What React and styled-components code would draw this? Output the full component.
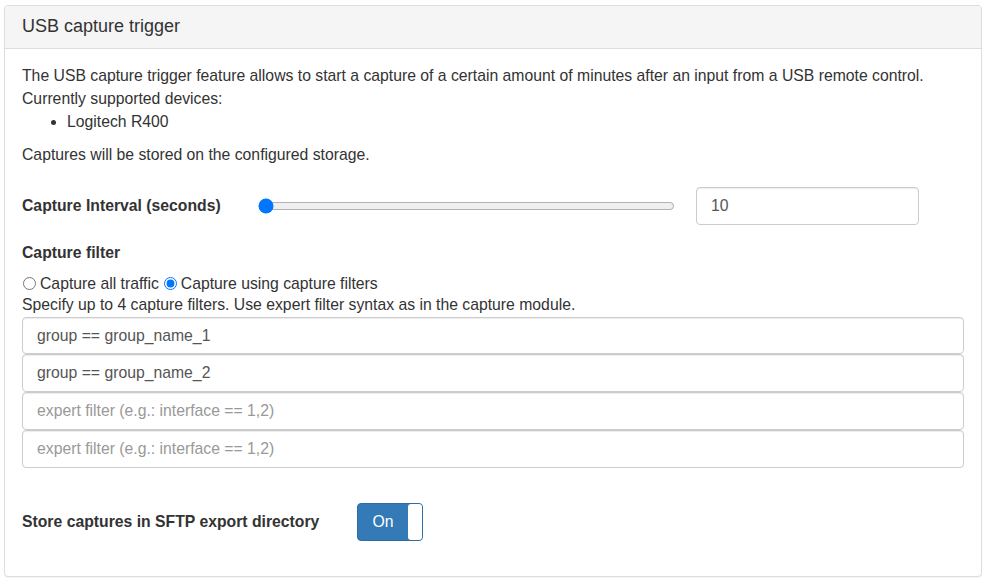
import React, { useState } from "react";
import styled, { createGlobalStyle } from "styled-components";

const GlobalStyle = createGlobalStyle`
  * { box-sizing: border-box; }
  body {
    margin: 0;
    background: #fff;
    font-family: "Liberation Sans", Arial, sans-serif;
    font-size: 15.75px;
    color: #333;
  }
`;

const Page = styled.div`
  padding: 5px 9px 8px 4px;
`;

const Panel = styled.div`
  border: 1px solid #ddd;
  border-radius: 4px;
  background: #fff;
  box-shadow: 0 1px 1px rgba(0, 0, 0, 0.05);
`;

const PanelHeading = styled.div`
  background: #f5f5f5;
  border-bottom: 1px solid #ddd;
  border-radius: 3px 3px 0 0;
  padding: 10px 17px 11px;
  font-size: 18px;
  line-height: 21px;
  color: #333;
`;

const PanelBody = styled.div`
  padding: 15px 17px 35px;
`;

const Text = styled.p`
  margin: 0;
  line-height: 23px;
`;

const List = styled.ul`
  margin: 0 0 10px;
  padding-left: 45px;
  line-height: 23px;
`;

const FormRow = styled.div`
  display: flex;
  align-items: center;
  margin-top: ${(p) => p.$top || 0}px;
`;

const Label = styled.label`
  font-weight: bold;
  width: ${(p) => p.$width || 236}px;
  flex-shrink: 0;
`;

const Range = styled.input`
  width: 417px;
  margin: 0 21px 0 0;
`;

const TextInput = styled.input`
  display: block;
  width: ${(p) => p.$width || "100%"};
  height: ${(p) => p.$height || 38}px;
  padding: 6px 14px;
  font-family: inherit;
  font-size: 15.75px;
  color: #555;
  border: 1px solid #ccc;
  border-radius: 4px;
  box-shadow: inset 0 1px 1px rgba(0, 0, 0, 0.075);
  background: #fff;
  &::placeholder { color: #999; }
`;

const Heading = styled.div`
  font-weight: bold;
  margin-top: 16px;
  line-height: 23px;
`;

const RadioLine = styled.div`
  display: flex;
  align-items: center;
  margin-top: 10px;
  line-height: 19px;
`;

const Radio = styled.input`
  margin: 0 4px 0 1px;
  width: 13px;
  height: 13px;
`;

const RadioLabel = styled.label`
  margin-right: 4px;
`;

const FilterList = styled.div`
  display: flex;
  flex-direction: column;
  margin-top: 1px;
`;

const Toggle = styled.div`
  display: flex;
  width: 66px;
  height: 38px;
  border: 1px solid #2e6da4;
  border-radius: 4px;
  overflow: hidden;
  background: #337ab7;
`;

const ToggleOn = styled.span`
  flex: 1;
  color: #fff;
  display: flex;
  align-items: center;
  justify-content: center;
`;

const ToggleHandle = styled.span`
  width: 14px;
  background: #fff;
  border-radius: 3px 0 0 3px;
`;

export default function App() {
  const [mode, setMode] = useState("filters");
  return (
    <>
      <GlobalStyle />
      <Page>
        <Panel>
          <PanelHeading>USB capture trigger</PanelHeading>
          <PanelBody>
            <Text>
              The USB capture trigger feature allows to start a capture of a certain amount of minutes after an input from a USB remote control.
            </Text>
            <Text>Currently supported devices:</Text>
            <List>
              <li>Logitech R400</li>
            </List>
            <Text>Captures will be stored on the configured storage.</Text>

            <FormRow $top={21}>
              <Label>Capture Interval (seconds)</Label>
              <Range type="range" min="10" max="600" defaultValue="10" />
              <TextInput $width="223px" defaultValue="10" />
            </FormRow>

            <Heading>Capture filter</Heading>
            <RadioLine>
              <Radio
                type="radio"
                name="mode"
                id="all"
                checked={mode === "all"}
                onChange={() => setMode("all")}
              />
              <RadioLabel htmlFor="all">Capture all traffic</RadioLabel>
              <Radio
                type="radio"
                name="mode"
                id="filters"
                checked={mode === "filters"}
                onChange={() => setMode("filters")}
              />
              <RadioLabel htmlFor="filters">Capture using capture filters</RadioLabel>
            </RadioLine>
            <Text>Specify up to 4 capture filters. Use expert filter syntax as in the capture module.</Text>
            <FilterList>
              <TextInput $height={37} defaultValue="group == group_name_1" />
              <TextInput $height={38} defaultValue="group == group_name_2" />
              <TextInput $height={38} placeholder="expert filter (e.g.: interface == 1,2)" />
              <TextInput $height={38} placeholder="expert filter (e.g.: interface == 1,2)" />
            </FilterList>

            <FormRow $top={35}>
              <Label $width={335}>Store captures in SFTP export directory</Label>
              <Toggle>
                <ToggleOn>On</ToggleOn>
                <ToggleHandle />
              </Toggle>
            </FormRow>
          </PanelBody>
        </Panel>
      </Page>
    </>
  );
}
